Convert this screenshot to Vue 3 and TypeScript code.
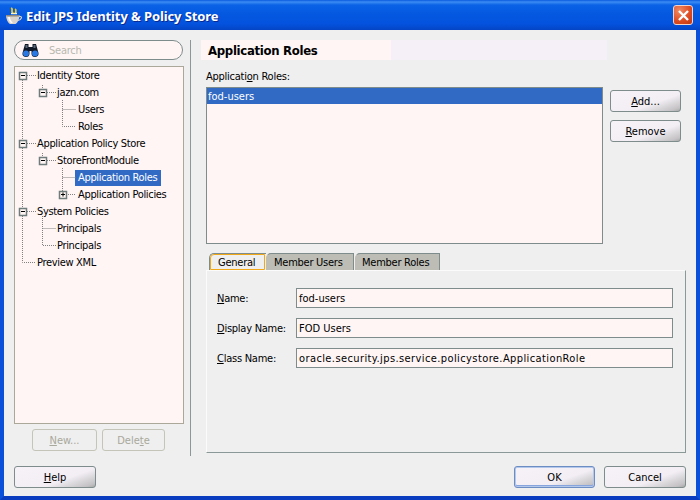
<script setup lang="ts">
interface TreeRow { label: string; level: number; selected?: boolean }
const rows: TreeRow[] = [
  { label: 'Identity Store', level: 0 },
  { label: 'jazn.com', level: 1 },
  { label: 'Users', level: 2 },
  { label: 'Roles', level: 2 },
  { label: 'Application Policy Store', level: 0 },
  { label: 'StoreFrontModule', level: 1 },
  { label: 'Application Roles', level: 2, selected: true },
  { label: 'Application Policies', level: 2 },
  { label: 'System Policies', level: 0 },
  { label: 'Principals', level: 1 },
  { label: 'Principals', level: 1 },
  { label: 'Preview XML', level: 0 },
]
const boxes = [
  { x: 3.5, y: 5.5, plus: false }, { x: 23.5, y: 22.5, plus: false },
  { x: 3.5, y: 73.5, plus: false }, { x: 23.5, y: 90.5, plus: false },
  { x: 43.5, y: 124.5, plus: true }, { x: 3.5, y: 141.5, plus: false },
]
const lines = [
  'M6.500 13V195.500H20', 'M11 8.500H20', 'M11 76.500H20', 'M11 144.500H20',
  'M26.500 18V22', 'M31 25.500H40', 'M46.500 33V59.500H60', 'M46.500 42.500H60',
  'M26.500 86V90', 'M31 93.500H40', 'M46.500 101V124', 'M46.500 110.500H60', 'M52 127.500H60',
  'M26.500 149V178.500H40', 'M26.500 161.500H40',
]
const fields = [
  { key: 'N', rest: 'ame:', value: 'fod-users', spaced: false },
  { key: 'D', rest: 'isplay Name:', value: 'FOD Users', spaced: false },
  { key: 'C', rest: 'lass Name:', value: 'oracle.security.jps.service.policystore.ApplicationRole', spaced: true },
]
</script>

<template>
  <div class="window">
    <header class="titlebar">
      <svg class="cup" width="18" height="18" viewBox="0 0 18 18">
        <path d="M6 1c3 1-1 3 2 5M10 2c2 1 0 3 1 4" stroke="#f2c81c" stroke-width="1.800" fill="none" />
        <path d="M6 6.500h6" stroke="#fff4b0" stroke-width="1.500" />
        <path d="M1 8h13.500c0 4-2 8-4 9H5C3 16 1 12 1 8z" fill="#d8d4cc" />
        <path d="M1 8h13.500l-.3 1.500H1.300z" fill="#8c8880" />
        <path d="M3 10c.5 3 1.500 5 3 6h2C6 14 5 12 5 10z" fill="#fafafa" />
        <path d="M14 9.500h1.500c1.500 0 1.500 3-2.500 4" stroke="#d8d4cc" stroke-width="1.200" fill="none" />
      </svg>
      <span class="title">Edit JPS Identity &amp; Policy Store</span>
      <button class="close" aria-label="Close">
        <svg width="13" height="13" viewBox="0 0 13 13">
          <path d="M2 2l9 9M11 2l-9 9" stroke="#fff" stroke-width="2.400" />
        </svg>
      </button>
    </header>

    <div class="body">
      <div class="main">
        <aside class="left">
          <div class="search">
            <svg width="17" height="15" viewBox="0 0 17 15">
              <path d="M3 1h3.500v3h4V1H14l2.500 9a3.500 3.500 0 0 1-7 1V8h-2v3a3.500 3.500 0 0 1-7-1z" fill="#101828" />
              <circle cx="4" cy="10.500" r="3" fill="#2a78e4" />
              <circle cx="13" cy="10.500" r="3" fill="#2a78e4" />
              <path d="M3.500 2h2v3h-2zM11.500 2h2v3h-2z" fill="#5a6878" />
            </svg>
            <span>Search</span>
          </div>
          <div class="tree">
            <svg class="guides" width="168" height="210" viewBox="0 0 168 210">
              <path v-for="d in lines" :key="d" :d="d" fill="none" stroke="#808080" stroke-dasharray="1 1" />
              <g v-for="b in boxes" :key="b.x + '-' + b.y">
                <rect :x="b.x" :y="b.y" width="7" height="7" fill="#fff5f5" stroke="#6f7c7c" stroke-width="1.500" />
                <path :d="`M${b.x + 1.500} ${b.y + 3}h4`" stroke="#000" />
                <path v-if="b.plus" :d="`M${b.x + 3.500} ${b.y + 1}v4`" stroke="#000" />
              </g>
            </svg>
            <div v-for="(r, i) in rows" :key="i" class="row" :class="'lv' + r.level">
              <span class="node" :class="{ selected: r.selected }">{{ r.label }}</span>
            </div>
          </div>
          <div class="left-actions">
            <button class="btn disabled new" disabled><u>N</u>ew...</button>
            <button class="btn disabled del" disabled>Dele<u>t</u>e</button>
          </div>
        </aside>

        <div class="divider"></div>

        <section class="right">
          <h1 class="heading"><span>Application Roles</span></h1>
          <div class="content">
            <div class="list-label">Applicati<u>o</u>n Roles:</div>
            <div class="list-row">
              <div class="list"><div class="list-item">fod-users</div></div>
              <div class="list-actions">
                <button class="btn side"><u>A</u>dd...</button>
                <button class="btn side"><u>R</u>emove</button>
              </div>
            </div>
            <div class="tabs">
              <div class="tab active"><span>General</span></div>
              <div class="tab users">Member Users</div>
              <div class="tab roles">Member Roles</div>
            </div>
            <div class="panel">
              <div v-for="f in fields" :key="f.key" class="field">
                <label><u>{{ f.key }}</u>{{ f.rest }}</label>
                <div class="input" :class="{ spaced: f.spaced }">{{ f.value }}</div>
              </div>
            </div>
          </div>
        </section>
      </div>

      <footer class="footer">
        <button class="btn wide"><u>H</u>elp</button>
        <div class="footer-right">
          <button class="btn ok">OK</button>
          <button class="btn wide">Cancel</button>
        </div>
      </footer>
    </div>
  </div>
</template>

<style>
html, body { margin: 0; padding: 0; }
</style>

<style scoped>
* { box-sizing: border-box; }
.window {
  width: 700px; height: 500px; display: flex; flex-direction: column; overflow: hidden;
  font-family: "DejaVu Sans Condensed", "DejaVu Sans", sans-serif; font-stretch: condensed; font-size: 11px; color: #000;
  letter-spacing: -.25px;
  background: #efefef;
}
.titlebar {
  height: 30px; flex: none; display: flex; align-items: center; padding: 0 7px 0 5px;
  background: linear-gradient(180deg, #0a5ae0 0, #3c8cf4 2px, #0a62e6 5px, #0458e0 14px, #0452de 24px, #0344c4 30px);
}
.cup { flex: none; margin-top: 2px; }
.title {
  margin: 2px 0 0 3px; color: #fff; font-weight: 700; font-size: 13px; letter-spacing: -.1px;
  font-family: "Noto Sans", sans-serif; text-shadow: 1px 1px 0 #0a2a90;
}
.close {
  margin-left: auto; width: 20px; height: 20px; padding: 0; display: flex; align-items: center; justify-content: center;
  border: 1px solid #f4d4c8; border-radius: 3px;
  background: radial-gradient(circle at 30% 25%, #f08a64, #dc4a20 60%, #c03810);
}
.body {
  flex: 1; display: flex; flex-direction: column; min-height: 0;
  border-left: 4px solid #0a50d8; border-right: 4px solid #0a50d8; border-bottom: 4px solid #0a3cc0;
  padding: 10px 10px 0;
}
.main { display: flex; height: 416px; flex: none; }
.left { width: 170px; flex: none; display: flex; flex-direction: column; }
.search {
  height: 20px; flex: none; width: 169px; display: flex; align-items: center; gap: 10px; padding-left: 7px;
  border: 1px solid #7f8c8c; border-radius: 10px; background: #fff5f5; color: #b8b8b0;
}
.tree {
  position: relative; margin-top: 6px; height: 358px; flex: none;
  border: 1px solid #aca899; background: #fff5f5; letter-spacing: -.33px;
}
.guides { position: absolute; left: 1px; top: 0; pointer-events: none; }
.row { height: 17px; display: flex; align-items: center; white-space: nowrap; }
.lv0 { padding-left: 21px; }
.lv1 { padding-left: 41px; }
.lv2 { padding-left: 60px; }
.node { padding: 0 1px; height: 16px; line-height: 16px; }
.lv2 .node { padding: 0 2px 0 3px; }
.selected { background: #316ac5; color: #fff; padding-right: 4px !important; }
.left-actions { display: flex; gap: 5px; margin: 5px 0 0 18px; }
.btn {
  height: 22px; padding: 0; font: inherit; letter-spacing: 0; color: #000; border: 1px solid #7f8c8c; border-radius: 3px;
  background: linear-gradient(160deg, #f6f2f8 0, #f2eef4 62%, #c4c2c4 92%, #a8a8a8 100%);
}
.btn.disabled { background: transparent; border-color: #c4c4b8; color: #a8a89c; }
.new { width: 65px; }
.del { width: 63px; }
.divider { width: 1px; flex: none; background: #8a9898; margin: 0 10px 0 6px; }
.right { flex: 1; min-width: 0; display: flex; flex-direction: column; }
.heading {
  margin: 0; height: 20px; width: 406px; flex: none; background: linear-gradient(90deg, #fff5f5 0 190px, #f5f0f8 190px);
  font-size: 13px; font-weight: 700; line-height: 21px; padding-left: 7px; letter-spacing: -.3px;
}
.content { margin-left: 5px; width: 480px; }
.list-label { height: 27px; padding-top: 10px; line-height: 14px; }
.list-row { display: flex; }
.list { width: 397px; height: 157px; border: 1px solid #7f8c8c; background: #fff5f5; }
.list-item { height: 16px; line-height: 18px; background: #316ac5; color: #fff; padding-left: 1px; letter-spacing: 0; }
.list-actions { margin: 3px 0 0 7px; display: flex; flex-direction: column; gap: 8px; }
.side { width: 71px; }
.tabs { display: flex; margin-top: 9px; height: 17px; padding-left: 3px; align-items: flex-end; }
.tab {
  height: 17px; padding-left: 7px; line-height: 18px; background: #bdbdb5; white-space: nowrap;
  border-top: 1px solid #7f8c8c; border-right: 1px solid #7f8c8c; border-top-left-radius: 5px;
  border-left: 1px solid #bdbdb5;
}
.tab.users { width: 88px; margin-right: 1px; }
.tab.roles { width: 85px; padding-left: 6px; }
.tab.active {
  background: #efefef; padding: 0; width: 57px; border-left: 1px solid #7f8c8c; border-right: 0;
}
.tab.active span {
  display: block; width: 55px; height: 16px; line-height: 15px; padding-left: 7px; margin-left: 0;
  border: 1px solid #f0a818; border-top-left-radius: 4px;
}
.panel {
  height: 183px; padding: 17px 12px 0 10px; display: flex; flex-direction: column; gap: 10px;
  border: 1px solid #8a9898; border-left-color: #fbfbfb; border-top-color: #fbfbfb;
}
.field { display: flex; align-items: center; height: 20px; }
.field label { width: 79px; flex: none; }
.input {
  width: 377px; height: 20px; line-height: 20px; padding-left: 2px; border: 1px solid #7f8c8c; background: #fff5f5;
  white-space: nowrap; letter-spacing: 0;
}
.input.spaced { letter-spacing: .4px; }
.footer { display: flex; justify-content: space-between; padding-top: 10px; }
.wide { width: 82px; }
.footer-right { display: flex; gap: 9px; }
.ok { width: 81px; border-color: #6c8cc4; box-shadow: inset 0 0 0 1px #b4c8ec, inset 0 -1px 0 1px #88a4dc; }
u { text-decoration-thickness: 1px; text-underline-offset: 1px; }
</style>
